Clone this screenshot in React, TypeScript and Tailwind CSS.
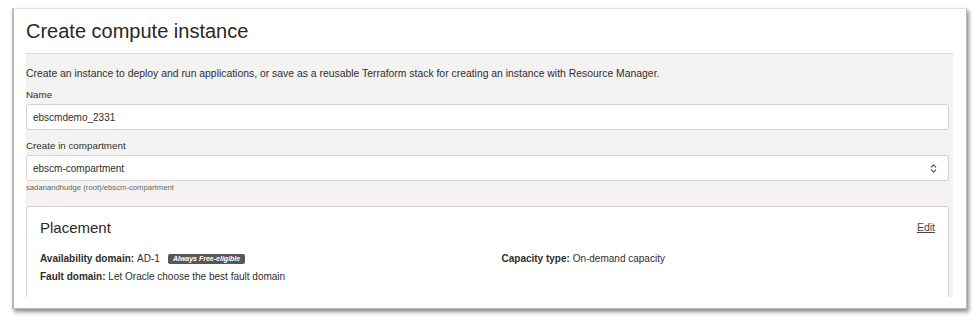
import { ChevronsUpDown } from 'lucide-react'

const font = { fontFamily: '"Liberation Sans", Arial, sans-serif' }

function Field({ label, value, select }: { label: string; value: string; select?: boolean }) {
  return (
    <div>
      <div className="text-[9.8px] leading-[14px] text-[#312d2a]">{label}</div>
      <div className="mt-[2px] flex h-[26px] items-center justify-between rounded-[3px] border border-[#d5d2cf] bg-white pl-[6px] pr-[9px] text-[10px] text-[#312d2a]">
        <span>{value}</span>
        {select && <ChevronsUpDown size={11} strokeWidth={2.2} className="text-[#4a4541]" />}
      </div>
    </div>
  )
}

export default function App() {
  return (
    <div className="h-[326px] w-[978px] bg-white pl-[12px] pt-[8px]" style={font}>
      <div className="h-[301px] w-[955px] border border-l-2 border-[#b9b9b9] border-t-[#e2e2e2] bg-white shadow-[2px_3px_4px_rgba(0,0,0,0.45)]">
        <div className="h-[288px] overflow-hidden pl-[12px] pr-[13px]">
          <div className="flex h-[45px] items-center border-b border-[#dcdad8]">
            <h1 className="text-[20px] leading-none text-[#2b2724]">Create compute instance</h1>
          </div>
          <div className="h-full bg-[#f4f3f2] pr-[4px] pt-[13px]">
            <p className="text-[10.4px] leading-[14px] text-[#312d2a]">
              Create an instance to deploy and run applications, or save as a reusable Terraform stack for creating an instance with Resource Manager.
            </p>
            <div className="mt-[7px] flex flex-col gap-[9px]">
              <Field label="Name" value="ebscmdemo_2331" />
              <div>
                <Field label="Create in compartment" value="ebscm-compartment" select />
                <div className="mt-[2px] text-[7.7px] leading-[10px] text-[#6b6661]">sadanandhudge (root)/ebscm-compartment</div>
              </div>
            </div>
            <div className="mt-[13px] h-[120px] rounded-[3px] border border-[#d5d2cf] bg-white px-[13px] pt-[11px]">
              <div className="flex items-center justify-between">
                <h2 className="text-[15px] leading-[20px] text-[#2b2724]">Placement</h2>
                <a className="text-[10.5px] text-[#4a4541] underline">Edit</a>
              </div>
              <div className="mt-[14px] grid grid-cols-2 gap-x-7 gap-y-[4px] text-[10px] leading-[14px] text-[#312d2a]">
                <div className="flex items-center">
                  <span className="font-bold">Availability domain:</span>
                  <span className="ml-[3px]">AD-1</span>
                  <span className="ml-[8px] rounded-[2px] bg-[#5b5652] px-[5px] text-[7px] font-bold italic leading-[10px] text-white">
                    Always Free-eligible
                  </span>
                </div>
                <div>
                  <span className="font-bold">Capacity type:</span> On-demand capacity
                </div>
                <div>
                  <span className="font-bold">Fault domain:</span> Let Oracle choose the best fault domain
                </div>
              </div>
            </div>
          </div>
        </div>
      </div>
    </div>
  )
}
